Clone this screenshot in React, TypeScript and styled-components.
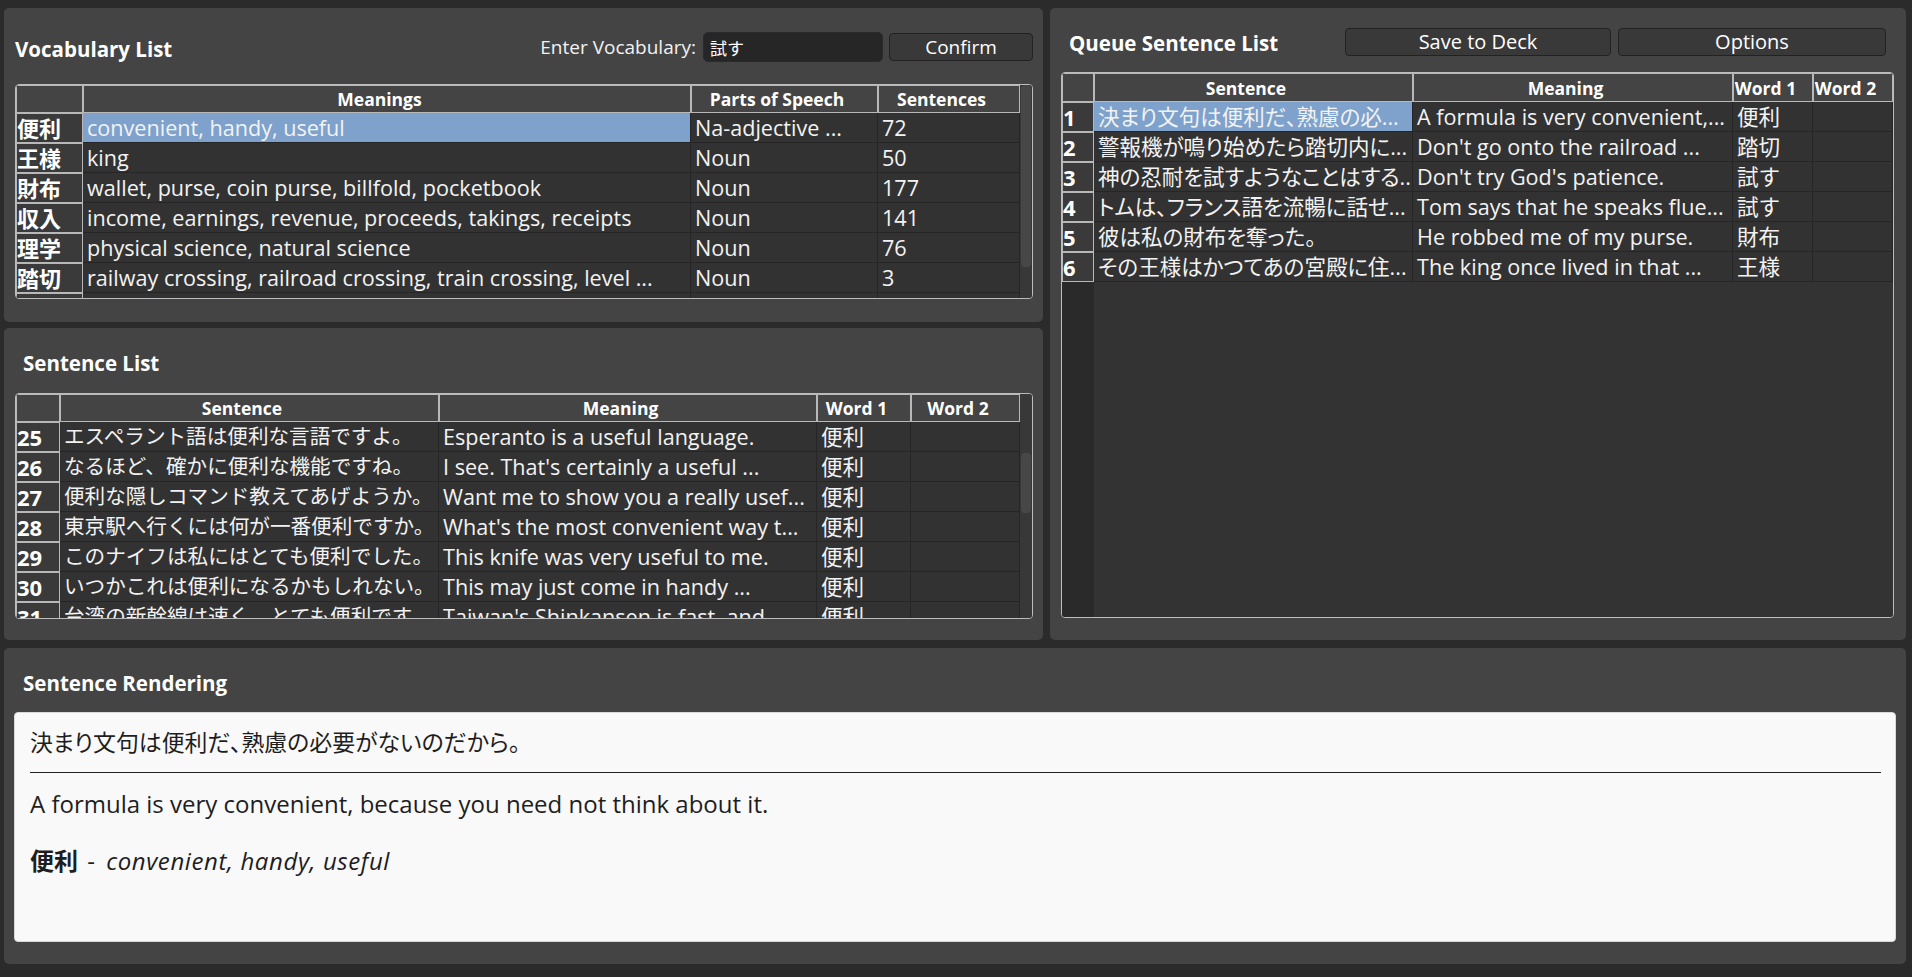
import React from "react";
import styled, { createGlobalStyle, css } from "styled-components";

const GlobalStyle = createGlobalStyle`
  html, body { margin: 0; padding: 0; background: #2b2b2b; }
  body {
    font-family: "Open Sans", "Noto Sans CJK JP", sans-serif;
    color: #f0f0f0;
  }
  * { box-sizing: border-box; }
`;

const Page = styled.div`
  width: 1912px;
  height: 977px;
  padding: 8px 6px 13px 4px;
  display: flex;
  flex-direction: column;
  gap: 8px;
`;

const TopRow = styled.div`
  display: flex;
  gap: 7px;
  height: 632px;
`;

const LeftCol = styled.div`
  width: 1039px;
  display: flex;
  flex-direction: column;
  gap: 6px;
`;

const Panel = styled.section<{ $h: number; $pt: number; $pl: number; $pr: number; $grow?: boolean }>`
  background: #444444;
  border-radius: 5px;
  height: ${(p) => p.$h}px;
  padding: ${(p) => p.$pt}px ${(p) => p.$pr}px 0 ${(p) => p.$pl}px;
  display: flex;
  flex-direction: column;
  flex: ${(p) => (p.$grow ? 1 : "none")};
  min-width: 0;
`;

const PanelHead = styled.div<{ $h: number; $indent: number }>`
  height: ${(p) => p.$h}px;
  display: flex;
  align-items: center;
  padding-left: ${(p) => p.$indent}px;
  flex: none;
`;

const Title = styled.h2<{ $nudge?: number }>`
  margin: ${(p) => p.$nudge ?? 0}px 0 0 0;
  font-size: 20.5px;
  font-weight: 700;
  color: #ffffff;
  white-space: nowrap;
`;

const FieldLabel = styled.label`
  margin-left: auto;
  font-size: 19px;
  color: #f2f2f2;
  white-space: nowrap;
`;

const TextInput = styled.input`
  width: 180px;
  height: 30px;
  margin-left: 7px;
  background: #262626;
  border: 1px solid #2a2a2a;
  border-radius: 5px;
  color: #ffffff;
  font-family: "Open Sans", "Noto Sans CJK JP", sans-serif;
  font-size: 17px;
  padding: 0 6px;
  outline: none;
`;

const Button = styled.button<{ $w: number; $gap?: number; $fs?: number }>`
  width: ${(p) => p.$w}px;
  height: 28px;
  margin-left: ${(p) => p.$gap ?? 0}px;
  background: #393939;
  border: 1px solid #222222;
  border-radius: 4px;
  color: #ffffff;
  font-family: "Open Sans", "Noto Sans CJK JP", sans-serif;
  font-size: ${(p) => p.$fs ?? 19}px;
  line-height: 26px;
  padding: 0;
  flex: none;
`;

const ButtonGroup = styled.div`
  margin-left: auto;
  margin-right: 8px;
  margin-top: -2px;
  display: flex;
  gap: 7px;
`;

const TableFrame = styled.div<{ $h: number; $mt: number }>`
  height: ${(p) => p.$h}px;
  margin-top: ${(p) => p.$mt}px;
  border: 1px solid #bdbdbd;
  border-radius: 4px;
  overflow: hidden;
  display: flex;
  background: #383838;
  flex: none;
`;

const Grid = styled.div<{ $cols: string; $rh: number; $head: number }>`
  flex: 1;
  display: grid;
  grid-template-columns: ${(p) => p.$cols};
  grid-template-rows: ${(p) => p.$head}px;
  grid-auto-rows: 30px;
  align-content: start;
  overflow: hidden;
  background: linear-gradient(to right, #2a2a2a ${(p) => p.$rh}px, #333333 ${(p) => p.$rh}px);
`;

const HeadCell = styled.div`
  background: #444444;
  box-shadow: inset 0 0 0 1px #b8b8b8;
  font-size: 17.5px;
  font-weight: 700;
  color: #ffffff;
  white-space: nowrap;
  overflow: hidden;
  display: flex;
  align-items: center;
  justify-content: center;
  padding-right: 15px;
`;

const Corner = styled.div`
  background: #444444;
  box-shadow: inset 0 0 0 1px #b8b8b8;
`;

const RowHead = styled.div`
  background: #3a3a3a;
  box-shadow: inset 0 0 0 1px #b8b8b8;
  font-size: 22px;
  font-weight: 700;
  color: #ffffff;
  line-height: 30px;
  padding-left: 1px;
  white-space: nowrap;
  overflow: hidden;
`;

type Kind = "en" | "jp" | "jpp";

const kindStyles = {
  en: css`
    font-size: 21.6px;
  `,
  jp: css`
    font-size: 20.6px;
  `,
  jpp: css`
    font-size: 21.5px;
    font-feature-settings: "palt" 1;
  `,
};

const Cell = styled.div<{ $sel?: boolean; $kind: Kind }>`
  background: ${(p) => (p.$sel ? "#7ea2cc" : "#323232")};
  border-right: 1px solid #262626;
  border-bottom: 1px solid #262626;
  line-height: 29px;
  color: #f2f2f2;
  padding: 0 4px;
  white-space: nowrap;
  overflow: hidden;
  ${(p) => kindStyles[p.$kind]}
`;

const ScrollTrack = styled.div`
  width: 12px;
  flex: none;
  background: #383838;
`;

const Thumb = styled.div<{ $top: number; $h: number }>`
  margin: ${(p) => p.$top}px 0 0 1px;
  width: 10px;
  height: ${(p) => p.$h}px;
  border-radius: 4px;
  background: #474747;
`;

const RenderBox = styled.div`
  flex: none;
  height: 230px;
  background: #f9f9f9;
  border: 1px solid #d8d8d8;
  border-radius: 4px;
  padding: 0 14px 0 15px;
  color: #1e1e1e;
  font-size: 24px;
  font-feature-settings: "palt" 1;
`;

const RenderLine = styled.p<{ $mt: number; $jp?: boolean }>`
  margin: ${(p) => p.$mt}px 0 0 0;
  line-height: 30px;
  white-space: nowrap;
  font-size: ${(p) => (p.$jp ? "22.9px" : "24px")};
`;

const Rule = styled.hr`
  margin: 14px 0 0 0;
  border: none;
  border-top: 1px solid #222222;
  height: 0;
`;

const Word = styled.b`
  font-weight: 700;
  margin-right: 3px;
`;

const Gloss = styled.i`
  font-style: italic;
  margin-left: 5px;
  letter-spacing: 0.6px;
`;

type Row = { head: string; cells: string[]; sel?: number };

const vocabRows: Row[] = [
  { head: "便利", cells: ["convenient, handy, useful", "Na-adjective ...", "72"], sel: 0 },
  { head: "王様", cells: ["king", "Noun", "50"] },
  { head: "財布", cells: ["wallet, purse, coin purse, billfold, pocketbook", "Noun", "177"] },
  { head: "収入", cells: ["income, earnings, revenue, proceeds, takings, receipts", "Noun", "141"] },
  { head: "理学", cells: ["physical science, natural science", "Noun", "76"] },
  { head: "踏切", cells: ["railway crossing, railroad crossing, train crossing, level ...", "Noun", "3"] },
  { head: "試す", cells: ["to attempt, to test, to try out", "Godan verb ...", "65"] },
];

const sentenceRows: Row[] = [
  { head: "25", cells: ["エスペラント語は便利な言語ですよ。", "Esperanto is a useful language.", "便利", ""] },
  { head: "26", cells: ["なるほど、確かに便利な機能ですね。", "I see. That's certainly a useful ...", "便利", ""] },
  { head: "27", cells: ["便利な隠しコマンド教えてあげようか。", "Want me to show you a really usef...", "便利", ""] },
  { head: "28", cells: ["東京駅へ行くには何が一番便利ですか。", "What's the most convenient way t...", "便利", ""] },
  { head: "29", cells: ["このナイフは私にはとても便利でした。", "This knife was very useful to me.", "便利", ""] },
  { head: "30", cells: ["いつかこれは便利になるかもしれない。", "This may just come in handy ...", "便利", ""] },
  { head: "31", cells: ["台湾の新幹線は速く、とても便利です。", "Taiwan's Shinkansen is fast, and ...", "便利", ""] },
];

const queueRows: Row[] = [
  { head: "1", cells: ["決まり文句は便利だ、熟慮の必...", "A formula is very convenient,...", "便利", ""], sel: 0 },
  { head: "2", cells: ["警報機が鳴り始めたら踏切内に...", "Don't go onto the railroad ...", "踏切", ""] },
  { head: "3", cells: ["神の忍耐を試すようなことはする...", "Don't try God's patience.", "試す", ""] },
  { head: "4", cells: ["トムは、フランス語を流暢に話せ...", "Tom says that he speaks flue...", "試す", ""] },
  { head: "5", cells: ["彼は私の財布を奪った。", "He robbed me of my purse.", "財布", ""] },
  { head: "6", cells: ["その王様はかつてあの宮殿に住...", "The king once lived in that ...", "王様", ""] },
];

type TableProps = {
  height: number;
  mt?: number;
  cols: number[];
  kinds: Kind[];
  headH: number;
  headers: string[];
  rows: Row[];
  thumb?: { top: number; h: number };
};

function DataTable({ height, mt = 0, cols, kinds, headH, headers, rows, thumb }: TableProps) {
  return (
    <TableFrame $h={height} $mt={mt}>
      <Grid $cols={cols.map((c) => `${c}px`).join(" ")} $rh={cols[0]} $head={headH}>
        <Corner />
        {headers.map((h) => (
          <HeadCell key={h}>{h}</HeadCell>
        ))}
        {rows.map((r) => (
          <React.Fragment key={r.head}>
            <RowHead>{r.head}</RowHead>
            {r.cells.map((c, i) => (
              <Cell key={i} $sel={r.sel === i} $kind={kinds[i]}>
                {c}
              </Cell>
            ))}
          </React.Fragment>
        ))}
      </Grid>
      {thumb && (
        <ScrollTrack>
          <Thumb $top={thumb.top} $h={thumb.h} />
        </ScrollTrack>
      )}
    </TableFrame>
  );
}

export default function App() {
  return (
    <>
      <GlobalStyle />
      <Page>
        <TopRow>
          <LeftCol>
            <Panel $h={314} $pt={9} $pl={11} $pr={10}>
              <PanelHead $h={60} $indent={0}>
                <Title $nudge={4}>Vocabulary List</Title>
                <FieldLabel>Enter Vocabulary:</FieldLabel>
                <TextInput readOnly value="試す" />
                <Button $w={144} $gap={6}>
                  Confirm
                </Button>
              </PanelHead>
              <DataTable
                height={215}
                mt={7}
                cols={[67, 608, 187, 142]}
                kinds={["en", "en", "en"]}
                headH={28}
                headers={["Meanings", "Parts of Speech", "Sentences"]}
                rows={vocabRows}
                thumb={{ top: 0, h: 182 }}
              />
            </Panel>
            <Panel $h={312} $pt={5} $pl={11} $pr={10}>
              <PanelHead $h={60} $indent={8}>
                <Title>Sentence List</Title>
              </PanelHead>
              <DataTable
                height={226}
                cols={[44, 379, 378, 94, 109]}
                kinds={["jp", "en", "en", "en"]}
                headH={28}
                headers={["Sentence", "Meaning", "Word 1", "Word 2"]}
                rows={sentenceRows}
                thumb={{ top: 59, h: 60 }}
              />
            </Panel>
          </LeftCol>
          <Panel $h={632} $pt={5} $pl={11} $pr={12} $grow>
            <PanelHead $h={59} $indent={8}>
              <Title>Queue Sentence List</Title>
              <ButtonGroup>
                <Button $w={266} $fs={20}>
                  Save to Deck
                </Button>
                <Button $w={268} $fs={20}>
                  Options
                </Button>
              </ButtonGroup>
            </PanelHead>
            <DataTable
              height={546}
              cols={[32, 319, 320, 80, 80]}
              kinds={["jpp", "en", "en", "en"]}
              headH={29}
              headers={["Sentence", "Meaning", "Word 1", "Word 2"]}
              rows={queueRows}
            />
          </Panel>
        </TopRow>
        <Panel $h={316} $pt={5} $pl={10} $pr={10}>
          <PanelHead $h={59} $indent={9}>
            <Title>Sentence Rendering</Title>
          </PanelHead>
          <RenderBox>
            <RenderLine $mt={15} $jp>
              決まり文句は便利だ、熟慮の必要がないのだから。
            </RenderLine>
            <Rule />
            <RenderLine $mt={16}>A formula is very convenient, because you need not think about it.</RenderLine>
            <RenderLine $mt={27}>
              <Word>便利</Word>{" - "}<Gloss>convenient, handy, useful</Gloss>
            </RenderLine>
          </RenderBox>
        </Panel>
      </Page>
    </>
  );
}
